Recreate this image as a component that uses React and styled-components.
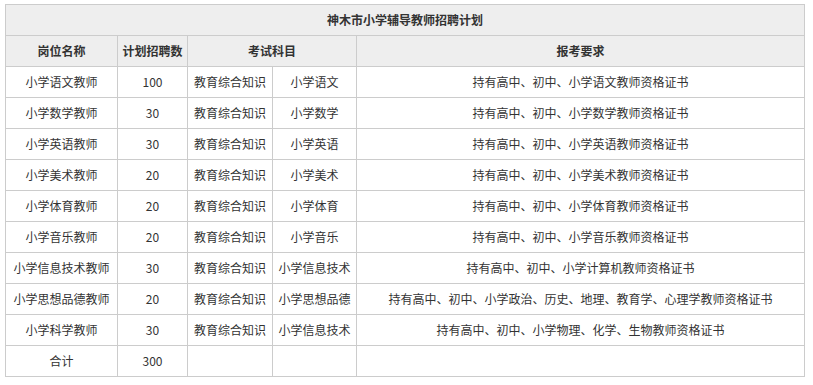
import React from "react";
import styled, { createGlobalStyle } from "styled-components";

const GlobalStyle = createGlobalStyle`
  html, body {
    margin: 0;
    padding: 0;
    background: #fff;
  }
  body {
    font-family: "Microsoft YaHei", "Noto Sans CJK SC", "Noto Sans", sans-serif;
    color: #333;
  }
`;

const Wrapper = styled.div`
  padding: 4px 0 0 5px;
`;

const Table = styled.table`
  width: 799px;
  border-collapse: collapse;
  table-layout: fixed;
  font-size: 12px;
`;

const Cell = styled.td`
  border: 1px solid #ccc;
  height: 30px;
  padding: 0 4px;
  text-align: center;
  vertical-align: middle;
  white-space: nowrap;
  line-height: 16px;
  color: #333;
  background: ${(p) => (p.$head ? "#eee" : "#fff")};
  font-weight: ${(p) => (p.$head ? "bold" : "normal")};
  text-align: ${(p) => (p.$left ? "left" : "center")};
`;

const rows = [
  ["小学语文教师", "100", "小学语文", "持有高中、初中、小学语文教师资格证书"],
  ["小学数学教师", "30", "小学数学", "持有高中、初中、小学数学教师资格证书"],
  ["小学英语教师", "30", "小学英语", "持有高中、初中、小学英语教师资格证书"],
  ["小学美术教师", "20", "小学美术", "持有高中、初中、小学美术教师资格证书"],
  ["小学体育教师", "20", "小学体育", "持有高中、初中、小学体育教师资格证书"],
  ["小学音乐教师", "20", "小学音乐", "持有高中、初中、小学音乐教师资格证书"],
  ["小学信息技术教师", "30", "小学信息技术", "持有高中、初中、小学计算机教师资格证书"],
  [
    "小学思想品德教师",
    "20",
    "小学思想品德",
    "持有高中、初中、小学政治、历史、地理、教育学、心理学教师资格证书",
  ],
  ["小学科学教师", "30", "小学信息技术", "持有高中、初中、小学物理、化学、生物教师资格证书"],
];

export default function App() {
  return (
    <Wrapper>
      <GlobalStyle />
      <Table>
        <colgroup>
          <col style={{ width: 112 }} />
          <col style={{ width: 70 }} />
          <col style={{ width: 85 }} />
          <col style={{ width: 84 }} />
          <col style={{ width: 448 }} />
        </colgroup>
        <tbody>
          <tr>
            <Cell $head colSpan={5}>
              神木市小学辅导教师招聘计划
            </Cell>
          </tr>
          <tr>
            <Cell $head>岗位名称</Cell>
            <Cell $head>计划招聘数</Cell>
            <Cell $head colSpan={2}>
              考试科目
            </Cell>
            <Cell $head>报考要求</Cell>
          </tr>
          {rows.map((r, i) => (
            <tr key={i}>
              <Cell>{r[0]}</Cell>
              <Cell>{r[1]}</Cell>
              <Cell>教育综合知识</Cell>
              <Cell>{r[2]}</Cell>
              <Cell>{r[3]}</Cell>
            </tr>
          ))}
          <tr>
            <Cell>合计</Cell>
            <Cell>300</Cell>
            <Cell />
            <Cell />
            <Cell />
          </tr>
        </tbody>
      </Table>
    </Wrapper>
  );
}
